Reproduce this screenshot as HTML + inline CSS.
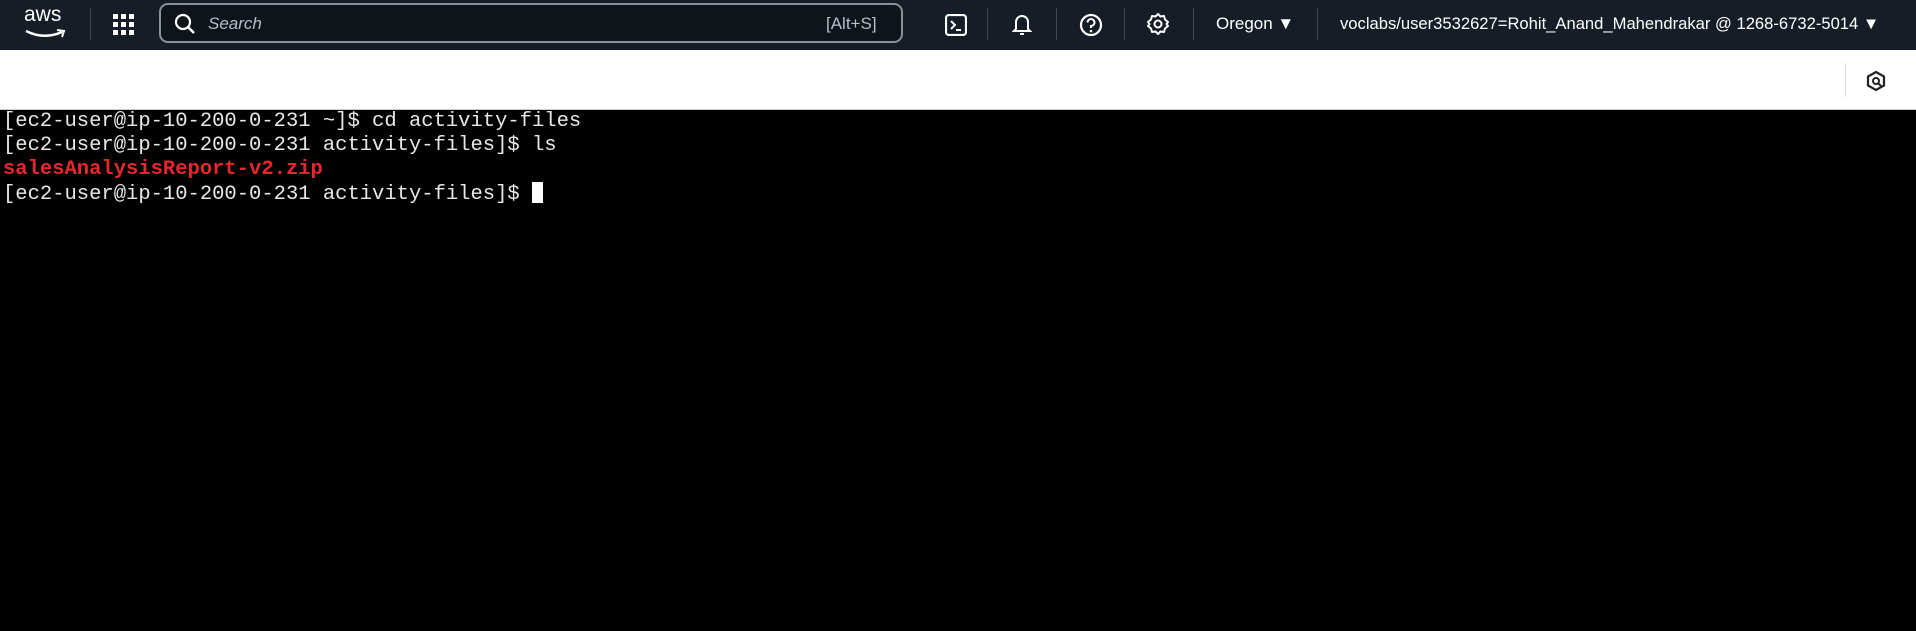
<!DOCTYPE html>
<html><head><meta charset="utf-8"><style>
body{margin:0;width:1916px;height:631px;background:#000;overflow:hidden;font-family:"Liberation Sans",sans-serif;position:relative}
.hdr{position:absolute;left:0;top:0;width:1916px;height:50px;background:#161d26}
.wb{position:absolute;left:0;top:50px;width:1916px;height:59px;background:#fff;border-bottom:1px solid #ccc}
.a{position:absolute}
.dv{position:absolute;top:8px;width:1px;height:32px;background:#424650}
.term{position:absolute;left:3px;top:110px;font-family:"Liberation Mono",monospace;font-size:20.5px;line-height:24px;color:#e8e8e8;white-space:pre}
.red{color:#e8272c;font-weight:bold}
.cur{display:inline-block;width:11px;height:21px;background:#fff;vertical-align:-4px}
.t{color:#fff;font-size:17px;position:absolute;top:14px;white-space:nowrap}
</style></head><body>
<div class="hdr">
 <div class="t" style="left:24px;top:3px;font-size:21px">aws</div>
 <svg class="a" style="left:24px;top:28px" width="44" height="12"><path d="M2 3 Q20 12 38 4" stroke="#fff" stroke-width="2.5" fill="none"/><path d="M33 2 L40 3 L38 9" stroke="#fff" stroke-width="2" fill="none"/></svg>
 <div class="dv" style="left:90px"></div>
 <svg class="a" style="left:113px;top:14px" width="22" height="22" fill="#fff"><rect x="0" y="0" width="5" height="5"/><rect x="8" y="0" width="5" height="5"/><rect x="16" y="0" width="5" height="5"/><rect x="0" y="8" width="5" height="5"/><rect x="8" y="8" width="5" height="5"/><rect x="16" y="8" width="5" height="5"/><rect x="0" y="16" width="5" height="5"/><rect x="8" y="16" width="5" height="5"/><rect x="16" y="16" width="5" height="5"/></svg>
 <div class="a" style="left:159px;top:3px;width:740px;height:36px;border:2px solid #8d9099;border-radius:9px;background:#0f141b"></div>
 <svg class="a" style="left:174px;top:13px" width="22" height="22"><circle cx="9" cy="9" r="7" stroke="#fff" stroke-width="2.2" fill="none"/><path d="M14 14 L20 20" stroke="#fff" stroke-width="2.5"/></svg>
 <div class="t" style="left:208px;font-style:italic;color:#b6bec9">Search</div>
 <div class="t" style="left:826px;color:#b6bec9">[Alt+S]</div>
 <svg class="a" style="left:945px;top:14px" width="22" height="22"><rect x="1" y="1" width="20" height="20" rx="3" stroke="#fff" stroke-width="2.2" fill="none"/><path d="M6 7 L10 11 L6 15 M11 16 H16" stroke="#fff" stroke-width="2" fill="none"/></svg>
 <div class="dv" style="left:987px"></div>
 <svg class="a" style="left:1011px;top:12px" width="22" height="26"><path d="M5 17 V10 A6 6 0 0 1 17 10 V17 L19 19 H3 Z" stroke="#fff" stroke-width="2" fill="none"/><path d="M9 22 H13" stroke="#fff" stroke-width="2"/></svg>
 <div class="dv" style="left:1056px"></div>
 <svg class="a" style="left:1079px;top:13px" width="24" height="24"><circle cx="12" cy="12" r="10" stroke="#fff" stroke-width="2.2" fill="none"/><path d="M8.5 9.5 A3.5 3.5 0 1 1 12 13 V15" stroke="#fff" stroke-width="2" fill="none"/><circle cx="12" cy="18" r="1.3" fill="#fff"/></svg>
 <div class="dv" style="left:1124px"></div>
 <svg class="a" style="left:1146px;top:12px" width="24" height="24"><circle cx="12" cy="12" r="3.5" stroke="#fff" stroke-width="2" fill="none"/><path d="M12 2 L14.5 4.5 L18 4 L19 7.5 L22 10 L20.5 12 L22 14 L19 16.5 L18 20 L14.5 19.5 L12 22 L9.5 19.5 L6 20 L5 16.5 L2 14 L3.5 12 L2 10 L5 7.5 L6 4 L9.5 4.5 Z" stroke="#fff" stroke-width="2" fill="none" stroke-linejoin="round"/></svg>
 <div class="dv" style="left:1193px"></div>
 <div class="t" style="left:1216px">Oregon ▼</div>
 <div class="dv" style="left:1317px"></div>
 <div class="t" style="left:1340px;font-size:16.6px">voclabs/user3532627=Rohit_Anand_Mahendrakar @ 1268-6732-5014 ▼</div>
</div>
<div class="wb">
 <div class="a" style="left:1845px;top:13px;width:1px;height:34px;background:#ddd"></div>
 <svg class="a" style="left:1866px;top:20px" width="20" height="22"><path d="M10 2 L18 6.5 V15.5 L10 20 L2 15.5 V6.5 Z" stroke="#222" stroke-width="2.2" fill="none"/><circle cx="10" cy="11" r="3" stroke="#222" stroke-width="2" fill="none"/><path d="M12 13 L15 16" stroke="#222" stroke-width="2"/></svg>
</div>
<div class="term">[ec2-user@ip-10-200-0-231 ~]$ cd activity-files
[ec2-user@ip-10-200-0-231 activity-files]$ ls
<span class="red">salesAnalysisReport-v2.zip</span>
[ec2-user@ip-10-200-0-231 activity-files]$ <span class="cur"></span></div>
</body></html>
